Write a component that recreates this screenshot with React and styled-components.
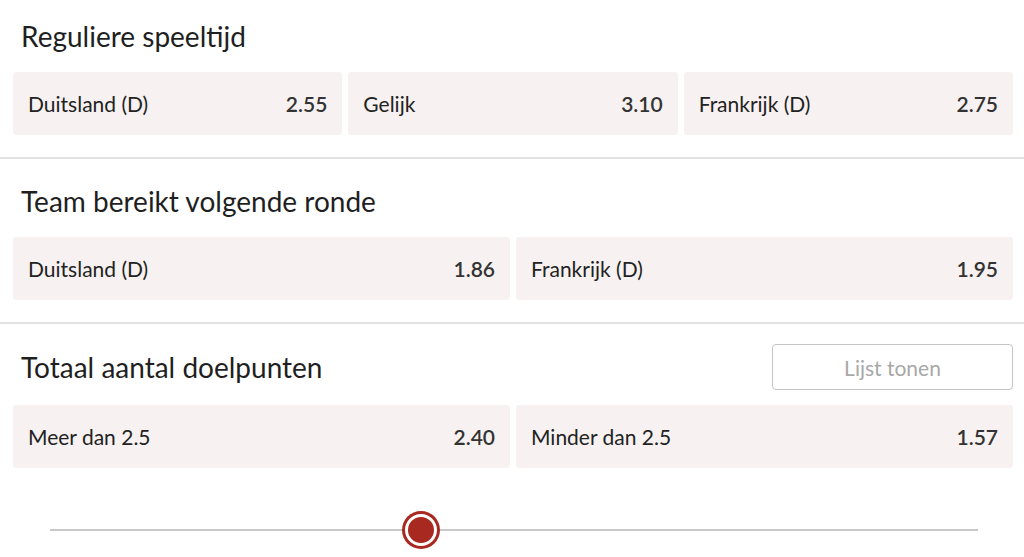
import React from "react";
import styled, { createGlobalStyle } from "styled-components";

const GlobalStyle = createGlobalStyle`
  body {
    margin: 0;
    background: #ffffff;
    font-family: Lato, "Open Sans", sans-serif;
    color: #222;
  }
`;

const markets = [
  {
    title: "Reguliere speeltijd",
    options: [
      { label: "Duitsland (D)", odds: "2.55" },
      { label: "Gelijk", odds: "3.10" },
      { label: "Frankrijk (D)", odds: "2.75" },
    ],
  },
  {
    title: "Team bereikt volgende ronde",
    options: [
      { label: "Duitsland (D)", odds: "1.86" },
      { label: "Frankrijk (D)", odds: "1.95" },
    ],
  },
  {
    title: "Totaal aantal doelpunten",
    action: "Lijst tonen",
    options: [
      { label: "Meer dan 2.5", odds: "2.40" },
      { label: "Minder dan 2.5", odds: "1.57" },
    ],
  },
];

function App() {
  const sliderValue = 0.4;

  return (
    <>
      <GlobalStyle />
      <Page>
        {markets.map((market, i) => (
          <Market key={market.title} first={i === 0} last={i === markets.length - 1}>
            <Header>
              <Title>{market.title}</Title>
              {market.action && <ListButton>{market.action}</ListButton>}
            </Header>
            <Options count={market.options.length}>
              {market.options.map((o) => (
                <Option key={o.label}>
                  <Label>{o.label}</Label>
                  <Odds>{o.odds}</Odds>
                </Option>
              ))}
            </Options>
          </Market>
        ))}
        <SliderWrap>
          <Track>
            <Knob style={{ left: `${sliderValue * 100}%` }} />
          </Track>
        </SliderWrap>
      </Page>
    </>
  );
}

export default App;

const Page = styled.main`
  width: 1024px;
  height: 557px;
  overflow: hidden;
`;

const Market = styled.section`
  padding: ${(p) => (p.first ? "13px" : "19px")} 11px
    ${(p) => (p.last ? "0" : "22px")} 13px;
  border-bottom: ${(p) => (p.last ? "none" : "2px solid #e2e2e2")};
`;

const Header = styled.div`
  display: flex;
  align-items: center;
  justify-content: space-between;
  min-height: 45px;
  margin-bottom: 14px;
`;

const Title = styled.h2`
  margin: 0;
  padding-left: 8px;
  font-size: 28px;
  font-weight: 400;
  color: #1f1f1f;
`;

const ListButton = styled.button`
  width: 241px;
  height: 46px;
  margin: 1px 0;
  border: 1.5px solid #c4c4c4;
  border-radius: 4px;
  background: #fff;
  color: #a8a8a8;
  font-family: inherit;
  font-size: 21px;
`;

const Options = styled.div`
  display: grid;
  grid-template-columns: repeat(${(p) => p.count}, 1fr);
  gap: 6px;
`;

const Option = styled.div`
  display: flex;
  align-items: center;
  justify-content: space-between;
  height: 63px;
  padding: 0 15px;
  background: #f7f2f1;
  border-radius: 3px;
  font-size: 21px;
`;

const Label = styled.span`
  color: #222;
`;

const Odds = styled.span`
  font-weight: 600;
  color: #333;
`;

const SliderWrap = styled.div`
  padding: 61px 46px 0 50px;
`;

const Track = styled.div`
  position: relative;
  height: 2px;
  background: #c9c9c9;
`;

const Knob = styled.div`
  position: absolute;
  top: 50%;
  width: 26px;
  height: 26px;
  border-radius: 50%;
  background: #a8291f;
  border: 3.5px solid #fff;
  box-shadow: 0 0 0 3px #a8291f;
  transform: translate(-50%, -50%);
`;
